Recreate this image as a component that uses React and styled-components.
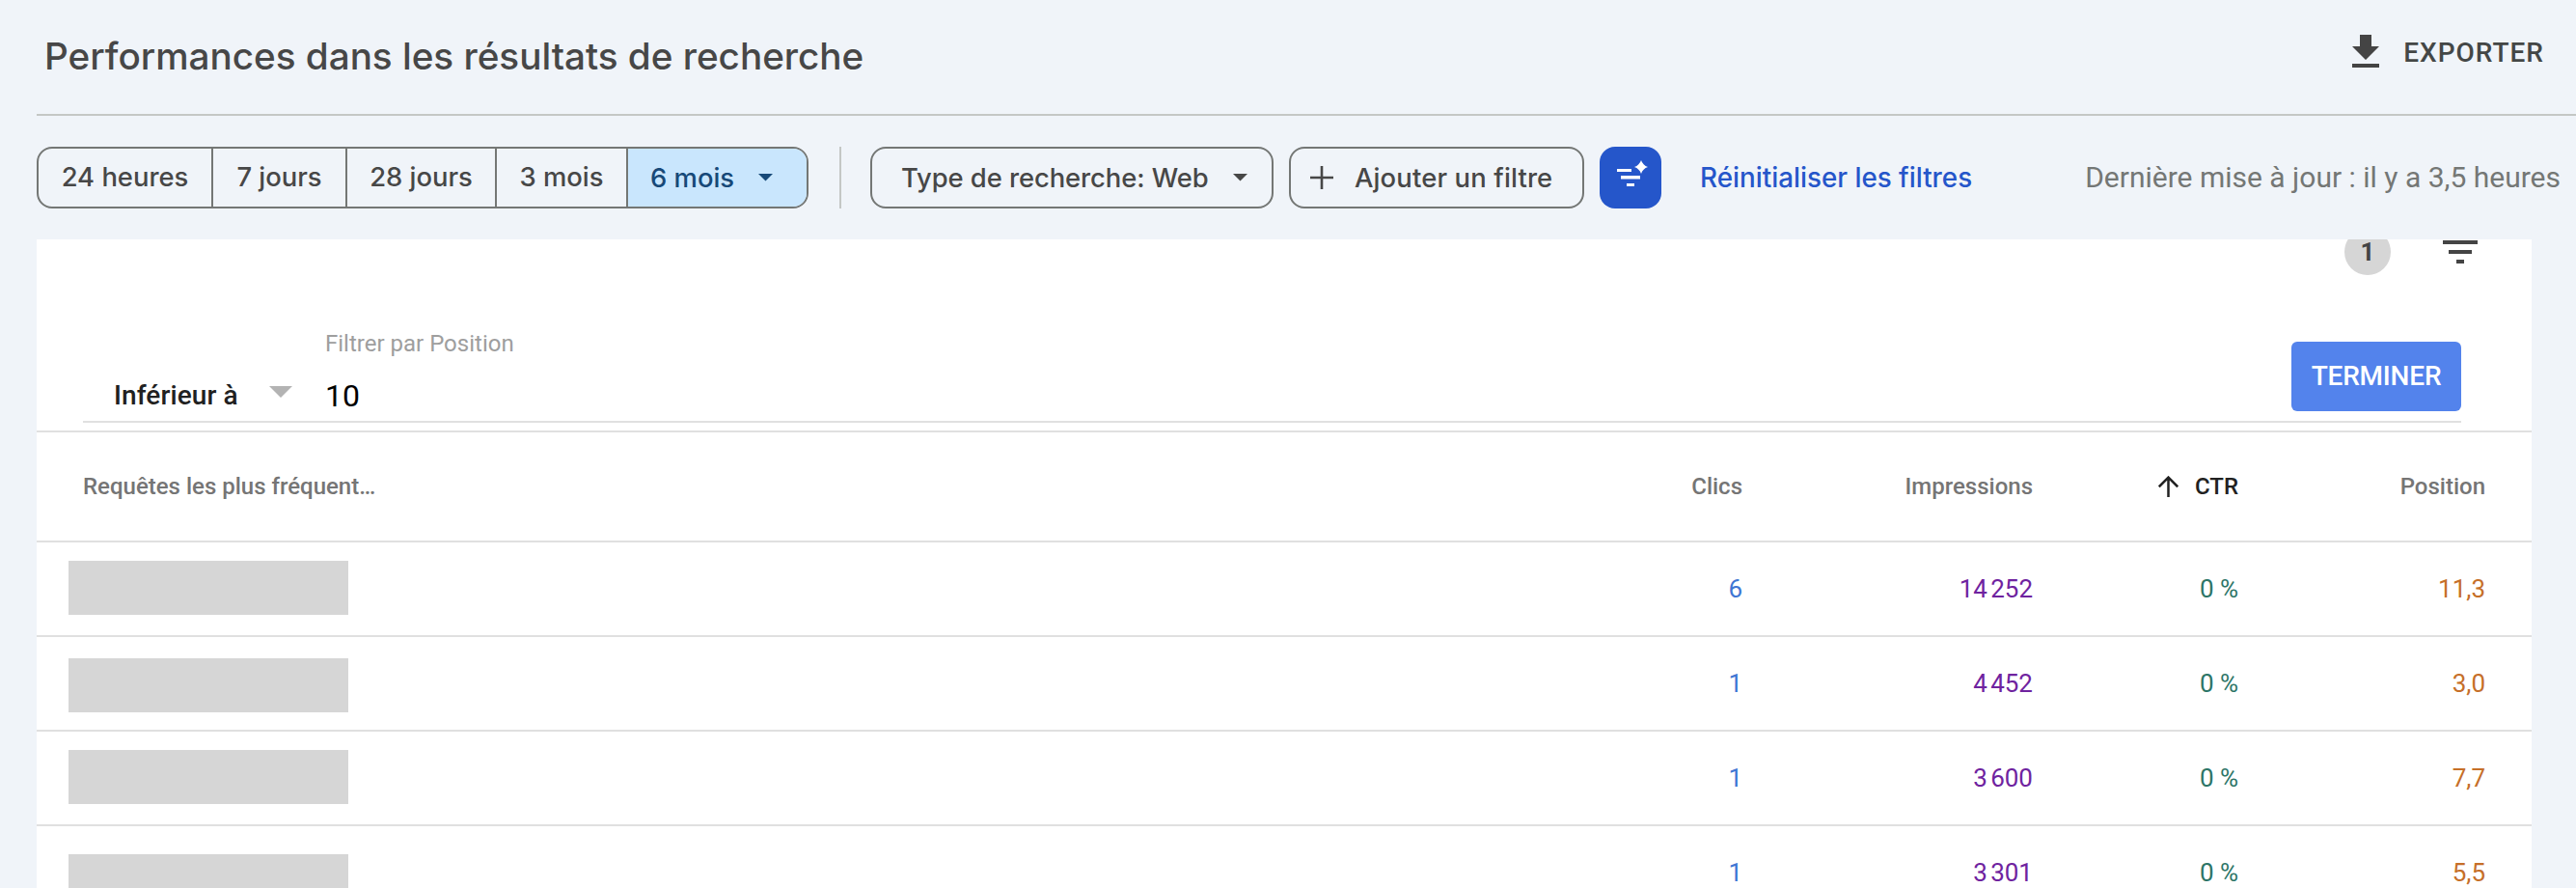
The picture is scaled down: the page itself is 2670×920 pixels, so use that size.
import React from "react";
import styled, { createGlobalStyle } from "styled-components";

const GlobalStyle = createGlobalStyle`
  * {
    box-sizing: border-box;
  }

  body {
    margin: 0;
    background: #f0f4f9;
    font-family: "Roboto", "Liberation Sans", sans-serif;
  }

  button {
    margin: 0;
    padding: 0;
    border: 0;
    background: none;
    font-family: inherit;
  }

  svg {
    display: block;
    flex: none;
  }
`

const Page = styled.div`
  display: flex;
  flex-direction: column;
  height: 920px;
  padding-left: 38px;
  overflow: hidden;
`

const Header = styled.header`
  flex: none;
  display: flex;
  align-items: center;
  justify-content: space-between;
  height: 120px;
  padding: 0 33px 0 8px;
  border-bottom: 2px solid #c4c7c5;
`

const Title = styled.h1`
  margin: 0 0 2px;
  font-family: "Inter", sans-serif;
  font-size: 38.7px;
  font-weight: 500;
  letter-spacing: -0.03px;
  color: #474747;
`

const ExportButton = styled.button`
  display: flex;
  align-items: center;
  gap: 15px;
  margin-bottom: 10px;
  font-size: 28px;
  font-weight: 500;
  letter-spacing: 1px;
  color: #444746;
`

const Toolbar = styled.div`
  flex: none;
  display: flex;
  align-items: center;
  height: 128px;
  padding-right: 16px;
  font-family: "Inter", sans-serif;
  font-size: 27.4px;
  font-weight: 500;
  color: #474747;
`

const RangeGroup = styled.div`
  display: flex;
  width: 800px;
  height: 64px;
  border: 2px solid #747775;
  border-radius: 16px;
  overflow: hidden;
`

const RangeButton = styled.button`
  width: ${p => p.$width}px;
  padding-bottom: 2px;
  border-right: 2px solid #747775;
  font-size: inherit;
  font-weight: inherit;
  color: inherit;
`

const ActiveRange = styled.button`
  flex: 1;
  display: flex;
  align-items: center;
  justify-content: space-between;
  padding: 0 35px 0 23px;
  background: #c9e6fd;
  font-size: inherit;
  font-weight: inherit;
  color: #174978;
`

const Separator = styled.div`
  width: 2px;
  height: 64px;
  margin: 0 30px 0 32px;
  background: #c4c7c5;
`

const FilterChip = styled.button`
  display: flex;
  align-items: center;
  justify-content: ${p => p.$spread ? "space-between" : "flex-start"};
  gap: 22px;
  width: ${p => p.$width}px;
  height: 64px;
  margin-right: 16px;
  padding: ${p => p.$spread ? "0 25px 0 30px" : "0 0 0 20px"};
  border: 2px solid #747775;
  border-radius: 16px;
  font-size: inherit;
  font-weight: inherit;
  letter-spacing: ${p => p.$spread ? "-0.08px" : "0.15px"};
  color: inherit;
`

const SmartFilterButton = styled.button`
  display: flex;
  align-items: center;
  justify-content: center;
  width: 64px;
  height: 64px;
  border-radius: 16px;
  background: #2556ca;
`

const ResetLink = styled.button`
  margin-left: 40px;
  font-size: 27.8px;
  font-weight: 500;
  color: #2556ca;
`

const LastUpdate = styled.span`
  margin-left: auto;
  margin-bottom: 1px;
  font-family: "Roboto", sans-serif;
  font-size: 30px;
  font-weight: 400;
  color: #747775;
`

const Card = styled.main`
  flex: 1;
  min-height: 0;
  width: 2586px;
  background: #ffffff;
  overflow: hidden;
`

// scrolled partly under the toolbar
const CardActions = styled.div`
  display: flex;
  justify-content: flex-end;
  gap: 48px;
  margin-top: -11px;
  padding-right: 50px;
`

const CountBadge = styled.span`
  display: flex;
  align-items: center;
  justify-content: center;
  width: 48px;
  height: 48px;
  border-radius: 50%;
  background: #d6d6d6;
`

const Count = styled.span`
  font-size: 26px;
  font-weight: 700;
  line-height: 24px;
  color: #444444;
`

const FilterRow = styled.div`
  display: flex;
  align-items: flex-end;
  height: 153px;
  margin: 0 73px 8px 48px;
  border-bottom: 2px solid #e0e0e0;
`

const Operator = styled.div`
  display: flex;
  align-items: center;
  justify-content: space-between;
  width: 251px;
  padding: 0 34px 6px 32px;
  font-size: 28px;
  font-weight: 500;
  line-height: 40px;
  letter-spacing: 0.1px;
  color: #212121;

  svg {
    margin-bottom: 8px;
  }
`

const Field = styled.div`
  flex: 1;
  display: flex;
  flex-direction: column;
  gap: 19px;
  padding-bottom: 6px;
`

const FieldLabel = styled.span`
  font-size: 24px;
  line-height: 30px;
  color: #9e9e9e;
`

const FieldValue = styled.span`
  font-size: 32px;
  line-height: 40px;
  color: #000000;
`

const DoneButton = styled.button`
  width: 176px;
  height: 72px;
  margin-bottom: 10px;
  padding-bottom: 2px;
  border-radius: 6px;
  background: #5383ec;
  font-size: 28px;
  font-weight: 500;
  letter-spacing: -0.2px;
  color: #ffffff;
`

const Row = styled.div`
  display: grid;
  grid-template-columns: 1fr 200px 301px 213px 256px;
  align-items: center;
  height: 98px;
  padding: 0 48px 0 33px;
  border-bottom: 2px solid #e0e0e0;
  font-size: 26px;
  text-align: right;
`

const HeadRow = styled(Row)`
  height: 116px;
  padding-left: 48px;
  border-top: 2px solid #e0e0e0;
  font-size: 24px;
  font-weight: 500;
  color: #757575;
`

const FirstHead = styled.span`
  text-align: left;
`

const SortedHead = styled.span`
  display: flex;
  align-items: center;
  justify-content: flex-end;
  gap: 17px;
  color: #212121;
`

const HiddenQuery = styled.div`
  align-self: start;
  width: 290px;
  height: 56px;
  margin-top: ${p => p.$top}px;
  background: #d6d6d6;
`

const Metric = styled.span`
  color: ${p => p.$color};
`

const ranges = [
  { label: "24 heures", width: 181 },
  { label: "7 jours", width: 139 },
  { label: "28 jours", width: 155 },
  { label: "3 mois", width: 136 },
]

const rows = [
  { top: 19, clicks: "6", impressions: "14\u202f252", ctr: "0 %", position: "11,3" },
  { top: 22, clicks: "1", impressions: "4\u202f452", ctr: "0 %", position: "3,0" },
  { top: 19, clicks: "1", impressions: "3\u202f600", ctr: "0 %", position: "7,7" },
  { top: 29, clicks: "1", impressions: "3\u202f301", ctr: "0 %", position: "5,5" },
]

const Caret = ({ width, height, color }) => (
  <svg width={ width } height={ height } viewBox="0 0 10 5" preserveAspectRatio="none">
    <path d="M0 0h10L5 5z" fill={ color } />
  </svg>
)

const DownloadIcon = () => (
  <svg width="48" height="48" viewBox="0 0 24 24" fill="#444444">
    <path d="M19 9h-4V3H9v6H5l7 7 7-7zM5 18v2h14v-2H5z" />
  </svg>
)

const PlusIcon = () => (
  <svg width="24" height="24" viewBox="0 0 24 24" stroke="#474747" strokeWidth="2.6">
    <path d="M12 0v24M0 12h24" />
  </svg>
)

const SmartFilterIcon = () => (
  <svg width="36" height="36" viewBox="0 0 36 36" fill="#ffffff">
    <path d="M4 9h15v3H4zM8 16h20v3.5H8zM14 24h8v3h-8z" />
    <path d="M29 0q1.8 5.2 7 7-5.2 1.8-7 7-1.8-5.2-7-7 5.2-1.8 7-7z" />
  </svg>
)

const FilterListIcon = () => (
  <svg width="48" height="48" viewBox="0 0 24 24" fill="#444444">
    <path d="M10 18h4v-2h-4v2zM3 6v2h18V6H3zm3 7h12v-2H6v2z" />
  </svg>
)

const ArrowUpIcon = () => (
  <svg width="21" height="22" viewBox="0 0 21 22" fill="none" stroke="#212121" strokeWidth="2.5">
    <path d="M10.5 22V1.6M.8 11.3l9.7-9.7 9.7 9.7" />
  </svg>
)

const App = () => {

  const renderRanges = () => (
    <RangeGroup>
      { ranges.map(range => (
        <RangeButton key={ range.label } $width={ range.width }>{ range.label }</RangeButton>
      )) }
      <ActiveRange>
        6 mois
        <Caret width={ 15 } height={ 7.5 } color="#174978" />
      </ActiveRange>
    </RangeGroup>
  )

  const renderRow = (row, index) => (
    <Row key={ index }>
      <HiddenQuery $top={ row.top } />
      <Metric $color="#3f76d3">{ row.clicks }</Metric>
      <Metric $color="#6f239f">{ row.impressions }</Metric>
      <Metric $color="#2d7567">{ row.ctr }</Metric>
      <Metric $color="#c66f29">{ row.position }</Metric>
    </Row>
  )

  return (
    <Page>
      <GlobalStyle />
      <Header>
        <Title>Performances dans les résultats de recherche</Title>
        <ExportButton><DownloadIcon />EXPORTER</ExportButton>
      </Header>
      <Toolbar>
        { renderRanges() }
        <Separator />
        <FilterChip $width={ 418 } $spread>
          Type de recherche: Web
          <Caret width={ 15 } height={ 7.5 } color="#474747" />
        </FilterChip>
        <FilterChip $width={ 306 }>
          <PlusIcon />
          Ajouter un filtre
        </FilterChip>
        <SmartFilterButton><SmartFilterIcon /></SmartFilterButton>
        <ResetLink>Réinitialiser les filtres</ResetLink>
        <LastUpdate>Dernière mise à jour : il y a 3,5 heures</LastUpdate>
      </Toolbar>
      <Card>
        <CardActions>
          <CountBadge><Count>1</Count></CountBadge>
          <FilterListIcon />
        </CardActions>
        <FilterRow>
          <Operator>
            Inférieur à
            <Caret width={ 24 } height={ 12 } color="#b3b3b3" />
          </Operator>
          <Field>
            <FieldLabel>Filtrer par Position</FieldLabel>
            <FieldValue>10</FieldValue>
          </Field>
          <DoneButton>TERMINER</DoneButton>
        </FilterRow>
        <HeadRow>
          <FirstHead>Requêtes les plus fréquent…</FirstHead>
          <span>Clics</span>
          <span>Impressions</span>
          <SortedHead><ArrowUpIcon />CTR</SortedHead>
          <span>Position</span>
        </HeadRow>
        { rows.map(renderRow) }
      </Card>
    </Page>
  );
}

export default App;
